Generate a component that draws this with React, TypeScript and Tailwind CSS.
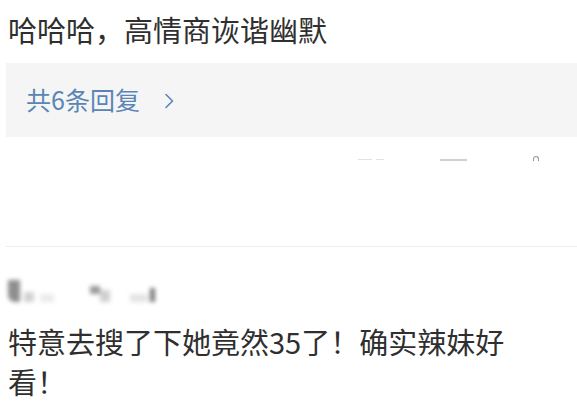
import React from 'react';

const Chevron: React.FC = () => (
  <svg width="12" height="18" viewBox="0 0 12 18" className="ml-[23px] mt-[2px]">
    <path d="M3 2.5 L9.5 9 L3 15.5" fill="none" stroke="#5b85b6" strokeWidth="1.6" strokeLinecap="round" strokeLinejoin="round" />
  </svg>
);

// blurred-out nickname, only grey patches survive in the shot
const BlurredName: React.FC = () => (
  <div className="ml-[8px] flex h-[24px] items-end blur-[2px]">
    <div className="h-[22px] w-[12px] rounded-bl-[7px] bg-[#8f8f8f]" />
    <div className="ml-[4px] h-[10px] w-[10px] bg-[#d2d2d2]" />
    <div className="ml-[6px] h-[8px] w-[14px] bg-[#ebebeb]" />
    <div className="ml-[36px] mb-[8px] h-[8px] w-[10px] bg-[#9a9a9a]" />
    <div className="h-[12px] w-[10px] bg-[#d0d0d0]" />
    <div className="ml-[20px] h-[8px] w-[18px] bg-[#e4e4e4]" />
    <div className="ml-[2px] h-[14px] w-[5px] bg-[#7a7a7a]" />
  </div>
);

export default function App() {
  return (
    <div className="h-[413px] w-[577px] overflow-hidden bg-white font-['Noto_Sans_CJK_SC',sans-serif] text-[#2f2f2f]">
      <p className="pl-[8px] pt-[9px] text-[29px] leading-[40px]">哈哈哈，高情商诙谐幽默</p>

      <div className="ml-[6px] mt-[14px] flex h-[74px] items-center bg-[#f5f5f5] pl-[20px] text-[25px] text-[#5b85b6]">
        <span>共6条回复</span>
        <Chevron />
      </div>

      {/* cut-off action icons */}
      <div className="mt-[22px] flex h-[4px] items-start">
        <div className="ml-[358px] h-[1px] w-[14px] bg-[#e2e2e2]" />
        <div className="ml-[4px] h-[1px] w-[8px] bg-[#e2e2e2]" />
        <div className="ml-[56px] h-[2px] w-[27px] bg-[#cfcfcf]" />
        <div className="ml-[66px] mt-[-3px] h-[5px] w-[6px] rounded-t-full border-[1.5px] border-b-0 border-[#999999]" />
      </div>

      <div className="ml-[6px] mt-[83px] h-[1px] bg-[#ededed]" />

      <div className="mt-[31px]">
        <BlurredName />
      </div>

      <p className="mt-[19px] pl-[8px] text-[29px] leading-[40px]">
        特意去搜了下她竟然35了！确实辣妹好
        <br />
        看！
      </p>
    </div>
  );
}
